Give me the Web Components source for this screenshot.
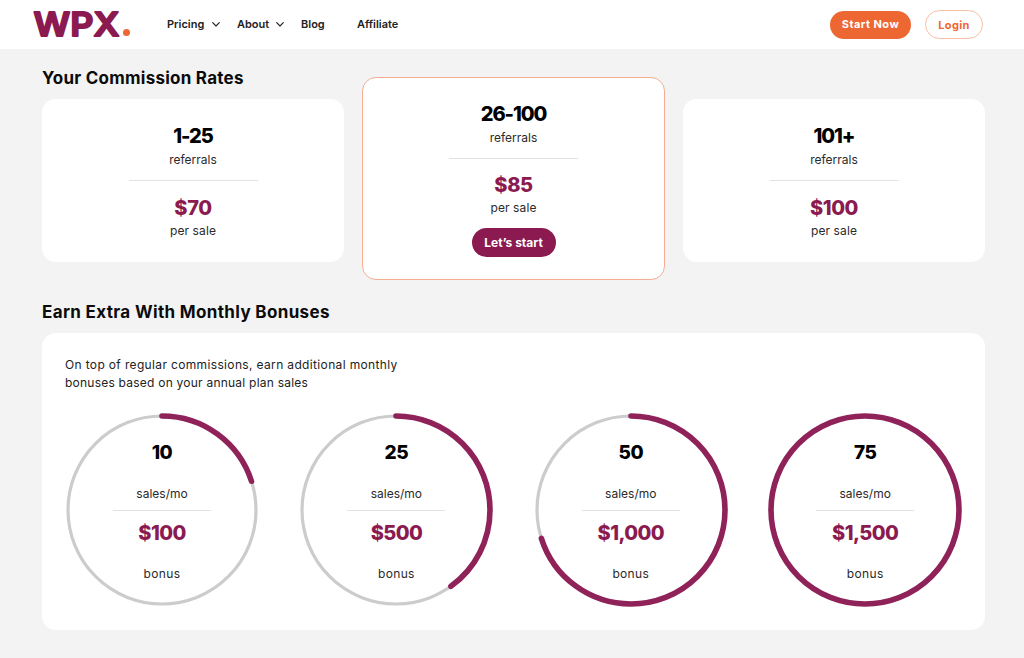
<!DOCTYPE html>
<html lang="en"><head><meta charset="utf-8"><title>WPX Affiliate</title>
<style>
html,body{margin:0;padding:0;background:#f3f3f3;font-family:Inter,"Liberation Sans",sans-serif;}
body{width:1024px;height:658px;overflow:hidden}
</style></head><body>
<wpx-header></wpx-header>
<wpx-main>
  <wpx-rates>
    <span slot="title">Your Commission Rates</span>
    <wpx-rate slot="a" range="1-25" price="$70"></wpx-rate>
    <wpx-rate slot="b" range="26-100" price="$85" featured></wpx-rate>
    <wpx-rate slot="c" range="101+" price="$100"></wpx-rate>
  </wpx-rates>
  <wpx-bonuses>
    <span slot="title">Earn Extra With Monthly Bonuses</span>
    <span slot="intro"><span style="letter-spacing:.35px">On top of regular commissions, earn additional monthly</span><br><span style="letter-spacing:.23px">bonuses based on your annual plan sales</span></span>
    <wpx-ring sales="10" amount="$100" pct="20"></wpx-ring>
    <wpx-ring sales="25" amount="$500" pct="40"></wpx-ring>
    <wpx-ring sales="50" amount="$1,000" pct="70"></wpx-ring>
    <wpx-ring sales="75" amount="$1,500" pct="100"></wpx-ring>
  </wpx-bonuses>
</wpx-main>
<script>
function def(name, css, html){
  customElements.define(name, class extends HTMLElement{
    connectedCallback(){
      if(this.shadowRoot) return;
      const r=this.attachShadow({mode:'open'});
      r.innerHTML='<style>'+css+'</style>'+(typeof html==='function'?html(this):html);
    }
  });
}
const chev='<svg width="8" height="5" viewBox="0 0 8 5" fill="none" stroke="#2a2a2a" stroke-width="1.2" stroke-linecap="round" stroke-linejoin="round"><path d="M.7.7 4 4 7.3.7"/></svg>';
def('wpx-header',`
:host{display:flex;align-items:center;height:49px;background:#fff;box-sizing:border-box;padding:0 41px 2px 33px;color:#222}
.logo{width:134px;height:30px;flex:none;display:block;overflow:visible}
nav{display:flex;align-items:center;font-size:11px;font-weight:600;flex:1}
nav span{display:inline-flex;align-items:center;gap:7px}
nav svg{margin-top:2px}
.p{width:70px}.p svg{margin-left:1px}.a{width:64px}.b{width:56px}
.start{background:#ed6732;color:#fff;border-radius:14px;width:81px;height:28px;box-sizing:border-box;padding-bottom:1px;margin:2px 0 0 1px;display:flex;align-items:center;justify-content:center;font-size:11px;font-weight:700;letter-spacing:.45px}
.login{margin:2px 0 0 14px;border:1px solid #f8bfa5;color:#ed6732;border-radius:15px;width:56px;height:27px;display:flex;align-items:center;justify-content:center;font-size:11px;font-weight:700;letter-spacing:.4px}
`,`<svg class="logo" viewBox="0 0 134 30" role="img" aria-label="WPX"><text x="0.5" y="27" textLength="86" lengthAdjust="spacingAndGlyphs" font-family="Inter,sans-serif" font-weight="600" font-size="33" fill="#8a1a50" stroke="#8a1a50" stroke-width="1.8" stroke-linejoin="round">WPX</text><circle cx="93.5" cy="23.5" r="3.5" fill="#ed6732"/></svg>
<nav><span class="p">Pricing ${chev}</span><span class="a">About ${chev}</span><span class="b">Blog</span><span>Affiliate</span></nav>
<div class="start">Start Now</div><div class="login">Login</div>`);
def('wpx-main',`:host{display:block;padding:0 39px 0 42px}`,`<slot></slot>`);
def('wpx-rates',`
:host{display:grid;grid-template-columns:302px 303px 302px;column-gap:18px;grid-template-rows:50px 163px 18px}
.t{grid-column:1;grid-row:1;font-size:17px;font-weight:700;color:#0b0b0b;letter-spacing:.25px;line-height:22px;align-self:start;padding-top:18px;white-space:nowrap}
.a{grid-column:1;grid-row:2;display:grid}
.b{grid-column:2;grid-row:1/4;margin-top:28px;display:grid}
.c{grid-column:3;grid-row:2;display:grid}
`,`<div class="t"><slot name="title"></slot></div><div class="a"><slot name="a"></slot></div><div class="b"><slot name="b"></slot></div><div class="c"><slot name="c"></slot></div>`);
def('wpx-rate',`
:host{display:flex;flex-direction:column;align-items:center;background:#fff;border-radius:14px;box-sizing:border-box;padding-top:25px;color:#222}
:host([featured]){border:1px solid #f6ad92;padding-top:24px}
.r{font-size:20px;font-weight:800;color:#000;line-height:24px;letter-spacing:-1.1px}
.s{font-size:12px;line-height:18px;margin-top:2.5px;color:#2a2a2a}
hr{width:129px;height:1px;border:0;background:#e2e2e2;margin:11.5px 0 0}
.p{font-size:20px;font-weight:800;color:#8a1a50;line-height:24px;margin-top:15px;letter-spacing:-.4px}
:host([featured]) .p{margin-top:14px}
.u{font-size:12px;line-height:18px;margin-top:2px;color:#2a2a2a;letter-spacing:.1px}
.btn{margin-top:10.5px;width:84px;height:29px;border-radius:15px;background:#8a1a50;color:#fff;font-size:12px;font-weight:700;display:flex;align-items:center;justify-content:center}
`,el=>`<div class="r">${el.getAttribute('range')}</div><div class="s">referrals</div><hr><div class="p">${el.getAttribute('price')}</div><div class="u">per sale</div>${el.hasAttribute('featured')?'<div class="btn">Let’s start</div>':''}`);
def('wpx-bonuses',`
:host{display:block}
.t{font-size:17px;font-weight:700;color:#0b0b0b;letter-spacing:.35px;line-height:22px;padding-top:21px;height:32px}
.card{width:943px;height:297px;background:#fff;border-radius:14px;box-sizing:border-box;padding:22px 0 0 24px}
.i{font-size:12px;line-height:18px;color:#222;height:60px;margin-left:-1px;padding-top:1px;box-sizing:border-box}
.g{display:flex;margin-top:-1px;gap:42.4px}
`,`<div class="t"><slot name="title"></slot></div><div class="card"><div class="i"><slot name="intro"></slot></div><div class="g"><slot></slot></div></div>`);
def('wpx-ring',`
:host{display:flex;flex-direction:column;align-items:center;position:relative;width:192px;height:192px;color:#222}
svg{position:absolute;left:0;top:0;overflow:visible}
.n{font-size:19px;font-weight:800;color:#000;line-height:24px;margin-top:27px;letter-spacing:-.4px}
.s{font-size:12px;line-height:18px;margin-top:20px;color:#2a2a2a}
hr{width:98px;height:1px;border:0;background:#e2e2e2;margin:6.5px 0 0}
.a{font-size:20px;font-weight:800;color:#8a1a50;line-height:24px;margin-top:10.5px;letter-spacing:-.6px}
.b{font-size:12px;line-height:18px;margin-top:20px;color:#2a2a2a;letter-spacing:.35px}
`,el=>{const p=+el.getAttribute('pct');const r=94;const c=2*Math.PI*r;
return `<svg width="192" height="192" viewBox="0 0 192 192" fill="none"><circle cx="96" cy="96" r="${r}" stroke="#cccccc" stroke-width="3.2"/><circle cx="96" cy="96" r="${r}" stroke="#8f2258" stroke-width="5.6" stroke-linecap="round" stroke-dasharray="${c*p/100} ${c}" transform="rotate(-90 96 96)"/></svg>
<div class="n">${el.getAttribute('sales')}</div><div class="s">sales/mo</div><hr><div class="a">${el.getAttribute('amount')}</div><div class="b">bonus</div>`});
</script></body></html>
